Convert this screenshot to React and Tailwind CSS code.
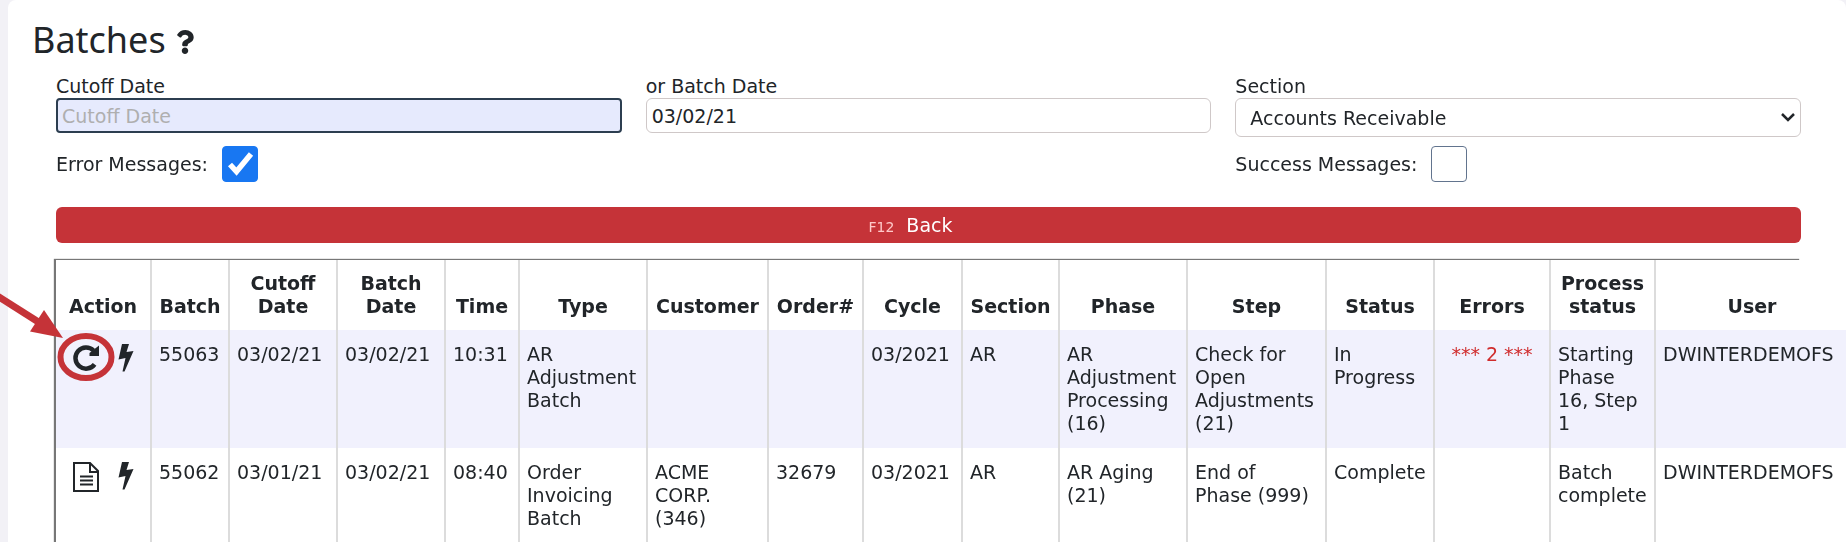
import { FaQuestion } from 'react-icons/fa'

const COLUMNS = [
  { label: 'Action', width: 'w-[95px]' },
  { label: 'Batch', width: 'w-[78px]' },
  { label: 'Cutoff Date', width: 'w-[108px]' },
  { label: 'Batch Date', width: 'w-[108px]' },
  { label: 'Time', width: 'w-[74px]' },
  { label: 'Type', width: 'w-[128px]' },
  { label: 'Customer', width: 'w-[121px]' },
  { label: 'Order#', width: 'w-[95px]' },
  { label: 'Cycle', width: 'w-[99px]' },
  { label: 'Section', width: 'w-[97px]' },
  { label: 'Phase', width: 'w-[128px]' },
  { label: 'Step', width: 'w-[139px]' },
  { label: 'Status', width: 'w-[108px]' },
  { label: 'Errors', width: 'w-[116px]' },
  { label: 'Process status', width: 'w-[105px]' },
  { label: 'User', width: 'w-[194px]' },
]

const BATCHES = [
  {
    icon: 'restart',
    marked: true,
    cells: ['55063', '03/02/21', '03/02/21', '10:31', 'AR Adjustment Batch', '', '', '03/2021', 'AR', 'AR Adjustment Processing (16)', 'Check for Open Adjustments (21)', 'In Progress'],
    errors: '*** 2 ***',
    process: 'Starting Phase 16, Step 1',
    user: 'DWINTERDEMOFS',
  },
  {
    icon: 'report',
    cells: ['55062', '03/01/21', '03/02/21', '08:40', 'Order Invoicing Batch', 'ACME CORP. (346)', '32679', '03/2021', 'AR', 'AR Aging (21)', 'End of Phase (999)', 'Complete'],
    errors: '',
    process: 'Batch complete',
    user: 'DWINTERDEMOFS',
  },
]

function RestartIcon() {
  return (
    <svg width="28" height="28" viewBox="0 0 28 28" fill="none" aria-hidden="true">
      <path d="M22.600 21.400A10.600 10.600 0 1 1 21.500 7.500" stroke="currentColor" strokeWidth="4.500" />
      <path d="M27 2.500v10.500H17.500V10z" fill="currentColor" />
    </svg>
  )
}

function ReportIcon() {
  return (
    <svg width="28" height="32" viewBox="0 0 28 32" fill="none" stroke="currentColor" strokeWidth="2" aria-hidden="true">
      <path d="M2 2h16l8 8v20H2zM18 2v9h8M8 15.500h13M8 19.500h13M8 23.500h13" />
    </svg>
  )
}

function BoltIcon() {
  return (
    <svg width="16" height="30" viewBox="0 0 16 30" fill="currentColor" aria-hidden="true">
      <path d="M4 1h7L8.500 9 15.500 8 6.500 28.500H4.500L7.500 15 .5 16.500z" />
    </svg>
  )
}

// Red ring and arrow pointing at the restart action
function Callout() {
  return (
    <svg className="pointer-events-none absolute top-[-58px] left-[-63px] max-w-none" width="120" height="100" viewBox="0 0 120 100" aria-hidden="true">
      <path d="M-4 10L40 38" stroke="#c53338" strokeWidth="7" />
      <path d="M63 53L44 25 30 46.500z" fill="#c53338" />
      <ellipse cx="86" cy="72" rx="25.500" ry="21" fill="none" stroke="#c53338" strokeWidth="6" />
    </svg>
  )
}

function Field({ id, label, children }) {
  return (
    <div>
      <label htmlFor={id} className="block leading-6">{label}</label>
      {children}
    </div>
  )
}

function CheckField({ id, label, defaultChecked }) {
  return (
    <div className="flex items-center gap-3.5">
      <label htmlFor={id}>{label}</label>
      <span className="relative flex">
        <input
          id={id}
          type="checkbox"
          defaultChecked={defaultChecked}
          className="peer size-9 appearance-none rounded border border-slate-500 bg-white checked:border-[#1877f2] checked:bg-[#1877f2]"
        />
        <svg className="pointer-events-none absolute inset-0 hidden peer-checked:block" width="36" height="36" viewBox="0 0 36 36" fill="none" aria-hidden="true">
          <path d="M8 18.500l6.500 7L29 8" stroke="#fff" strokeWidth="5.500" />
        </svg>
      </span>
    </div>
  )
}

export default function App() {
  return (
    <div className="relative min-h-screen overflow-hidden bg-[#f2f1f6] pl-2 font-['DejaVu_Sans',Verdana,sans-serif] text-[19px] leading-[23px] text-[#212529]">
      <main className="min-h-screen rounded-t-lg bg-white pt-4 pr-[45px] pl-12">
        <h1 className="-ml-6 flex items-center gap-2.5 font-['Noto_Sans',Tahoma,sans-serif] text-[36px] leading-[48px]">
          Batches
          <button type="button" aria-label="Help" className="pt-1">
            <FaQuestion className="h-6 w-[18px]" preserveAspectRatio="none" />
          </button>
        </h1>

        <form className="mt-2.5" onSubmit={(e) => e.preventDefault()}>
          <div className="grid grid-cols-3 items-start gap-x-6">
            <Field id="cutoff" label="Cutoff Date">
              <input id="cutoff" placeholder="Cutoff Date" autoFocus className="block h-[35px] w-full rounded border-2 border-[#2c3e50] bg-[#e6eafd] px-1 outline-none placeholder:text-[#afafaf]" />
            </Field>
            <Field id="batch-date" label="or Batch Date">
              <input id="batch-date" defaultValue="03/02/21" className="block h-[35px] w-full rounded-md border border-[#cfc8c8] px-[5px]" />
            </Field>
            <Field id="section" label="Section">
              <div className="relative">
                <select id="section" className="block h-[39px] w-full appearance-none rounded-md border border-[#cfc8c8] bg-white px-3.5 pt-0.5">
                  <option>Accounts Receivable</option>
                </select>
                <svg className="pointer-events-none absolute top-[15px] right-1.5" width="14" height="9" viewBox="0 0 14 9" fill="none" aria-hidden="true">
                  <path d="M1 1l6 6 6-6" stroke="#212529" strokeWidth="2.500" />
                </svg>
              </div>
            </Field>
          </div>
          <div className="mt-[9px] grid grid-cols-3 gap-x-6">
            <CheckField id="errors" label="Error Messages:" defaultChecked />
            <div />
            <CheckField id="success" label="Success Messages:" />
          </div>
          <button type="button" className="mt-[25px] flex h-9 w-full items-center justify-center gap-3 rounded-md bg-[#c53338] pr-9 text-white">
            <span className="pt-1 text-sm text-red-200">F12</span>
            Back
          </button>
        </form>

        <div className="mt-[17px] shadow-[-2px_-1px_1px_#777]">
          <table className="w-[1793px] table-fixed border-collapse bg-white">
            <thead>
              <tr>
                {COLUMNS.map((c) => (
                  <th key={c.label} className={`${c.width} border-r-2 border-[#dcdcdc] px-1 py-3 align-bottom font-bold`}>{c.label}</th>
                ))}
              </tr>
            </thead>
            <tbody>
              {BATCHES.map((b) => (
                <tr key={b.user + b.cells[0]} className="align-top odd:bg-[#f1f1fd] [&>td]:border-r-2 [&>td]:border-[#dcdcdc] [&>td]:px-[7px] [&>td]:py-[13px]">
                  <td>
                    <div className="relative flex items-start gap-[18px] pl-[9px]">
                      {b.marked && <Callout />}
                      <button type="button" aria-label={b.icon}>
                        {b.icon === 'restart' ? <RestartIcon /> : <ReportIcon />}
                      </button>
                      <button type="button" aria-label="Process">
                        <BoltIcon />
                      </button>
                    </div>
                  </td>
                  {b.cells.map((cell, i) => (
                    <td key={i}>{cell}</td>
                  ))}
                  <td className="text-center text-[#d02c2c]">{b.errors}</td>
                  <td>{b.process}</td>
                  <td>{b.user}</td>
                </tr>
              ))}
            </tbody>
          </table>
        </div>
      </main>
    </div>
  )
}
